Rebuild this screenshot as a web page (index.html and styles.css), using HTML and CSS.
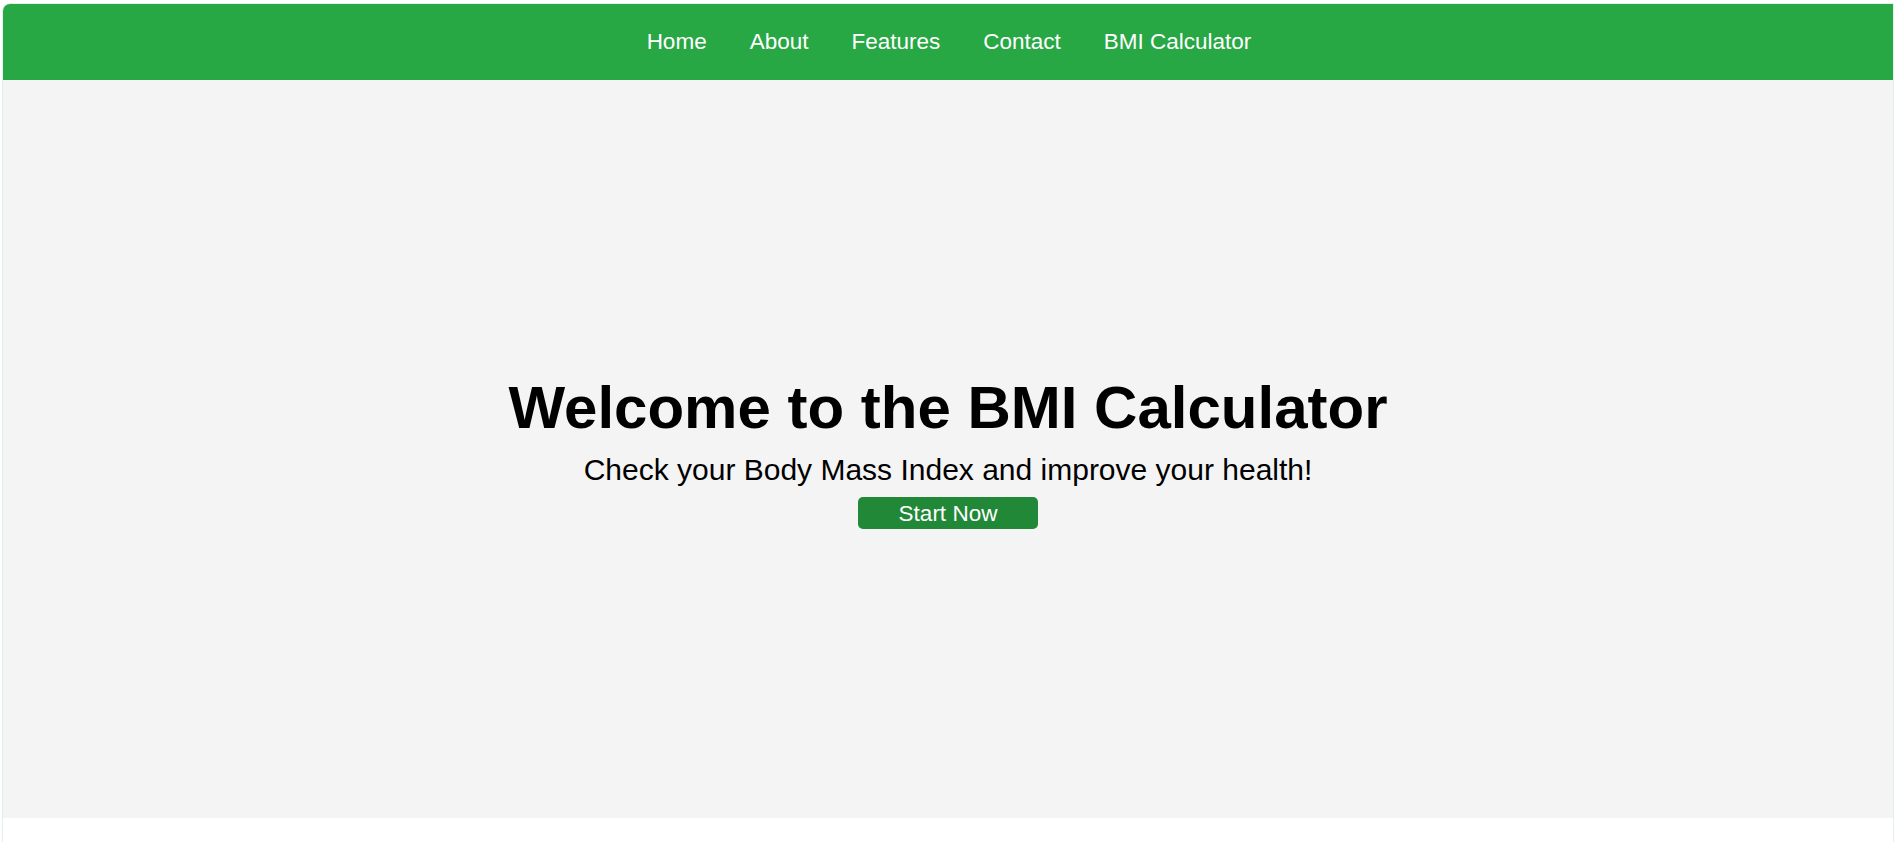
FILE: index.html
```html
<!DOCTYPE html>
<html lang="en">
<head>
<meta charset="utf-8">
<title>BMI Calculator</title>
<link rel="stylesheet" href="styles.css">
</head>
<body>
<div class="frame">
  <header class="site-header">
    <nav>
      <ul class="nav-list">
        <li><a href="#" class="nav-link">Home</a></li>
        <li><a href="#" class="nav-link">About</a></li>
        <li><a href="#" class="nav-link">Features</a></li>
        <li><a href="#" class="nav-link">Contact</a></li>
        <li><a href="#" class="nav-link">BMI Calculator</a></li>
      </ul>
    </nav>
  </header>
  <section class="hero">
    <h1 class="hero-title">Welcome to the BMI Calculator</h1>
    <p class="hero-subtitle">Check your Body Mass Index and improve your health!</p>
    <button class="hero-button">Start Now</button>
  </section>
</div>
</body>
</html>
```

FILE: styles.css
```css
html, body {
  margin: 0;
  padding: 0;
  height: 842px;
  overflow: hidden;
  background: #ffffff;
  font-family: "Liberation Sans", Arial, sans-serif;
}

.frame {
  margin: 3px 0 0 2px;
  width: 1890px;
  height: 838px;
  border: 1px solid #e2efee;
  border-bottom: none;
  border-top-left-radius: 8px;
  overflow: hidden;
  background: #ffffff;
}

.site-header {
  height: 76px;
  background: #28a745;
  display: flex;
  justify-content: center;
  align-items: center;
}

.nav-list {
  list-style: none;
  margin: 0;
  padding: 0 0 0 2px;
  display: flex;
  gap: 43px;
}

.nav-link {
  color: #ffffff;
  text-decoration: none;
  font-size: 22.5px;
  line-height: 26px;
}

.hero {
  height: 738px;
  background: #f4f4f4;
  display: flex;
  flex-direction: column;
  justify-content: center;
  align-items: center;
  text-align: center;
}

.hero-title {
  margin: 4px 0 11px;
  font-size: 60px;
  font-weight: bold;
  color: #000000;
  line-height: normal;
}

.hero-subtitle {
  margin: 0 0 10px;
  font-size: 30px;
  color: #000000;
  line-height: normal;
}

.hero-button {
  height: 32px;
  padding: 1px 41px 0;
  border: none;
  border-radius: 5px;
  background: #218838;
  color: #ffffff;
  font-family: "Liberation Sans", Arial, sans-serif;
  font-size: 22.5px;
  line-height: 31px;
  cursor: pointer;
}
```
